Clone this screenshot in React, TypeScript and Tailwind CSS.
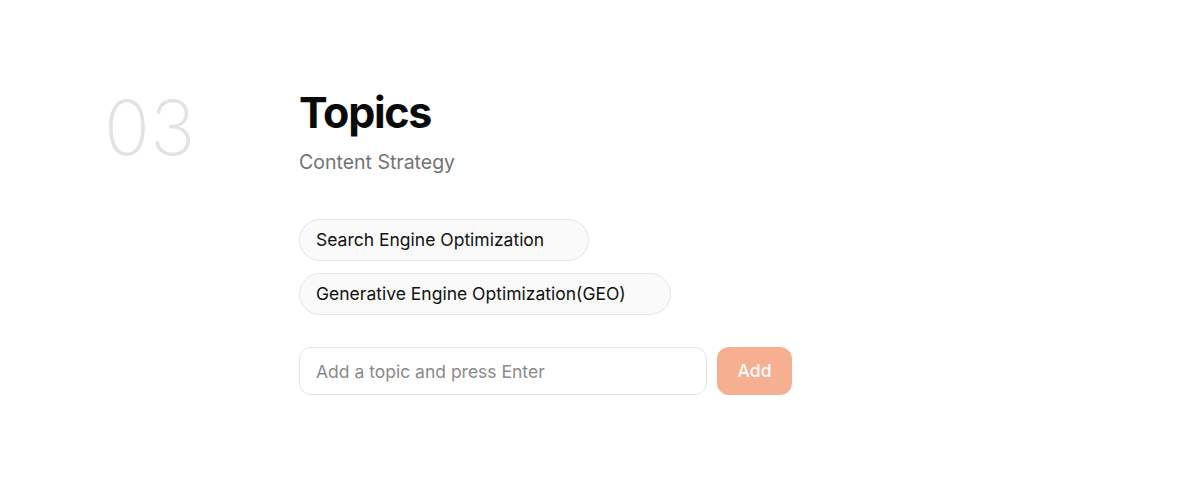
import { useState } from "react";

const font = { fontFamily: "Inter, 'Noto Sans', sans-serif" };

export default function App() {
  const [topics, setTopics] = useState<string[]>([
    "Search Engine Optimization",
    "Generative Engine Optimization(GEO)",
  ]);
  const [value, setValue] = useState("");

  const add = () => {
    const v = value.trim();
    if (!v) return;
    setTopics([...topics, v]);
    setValue("");
  };

  return (
    <div className="min-h-[484px] w-full bg-white" style={font}>
      <div className="flex pl-[104px] pt-[84px]">
        <div className="w-[195px] pt-[5px] text-[76px] font-extralight leading-none text-[#e2e2e2]">03</div>
        <div className="flex flex-col">
          <h1 className="text-[43px] font-bold leading-[56px] tracking-[-0.03em] text-[#0a0a0a]">Topics</h1>
          <p className="mt-[8px] text-[19.5px] leading-[28px] text-[#737373]">Content Strategy</p>

          <div className="mt-[43px] flex flex-col items-start gap-3">
            {topics.map((t) => (
              <div
                key={t}
                className="flex h-[42px] items-center rounded-full border border-[#e5e5e5] bg-[#fafafa] px-4 text-[17.5px] text-[#111]"
              >
                <span className="pr-[28px]">{t}</span>
              </div>
            ))}
          </div>

          <div className="mt-[32px] flex gap-[10px]">
            <input
              value={value}
              onChange={(e) => setValue(e.target.value)}
              onKeyDown={(e) => e.key === "Enter" && add()}
              placeholder="Add a topic and press Enter"
              className="h-[48px] w-[408px] rounded-xl border border-[#e5e5e5] px-4 text-[17.5px] text-[#111] outline-none placeholder:text-[#8a8a8a]"
            />
            <button
              onClick={add}
              className="h-[48px] w-[75px] rounded-xl bg-[#f7af91] text-[17.5px] font-medium text-white"
            >
              Add
            </button>
          </div>
        </div>
      </div>
    </div>
  );
}
